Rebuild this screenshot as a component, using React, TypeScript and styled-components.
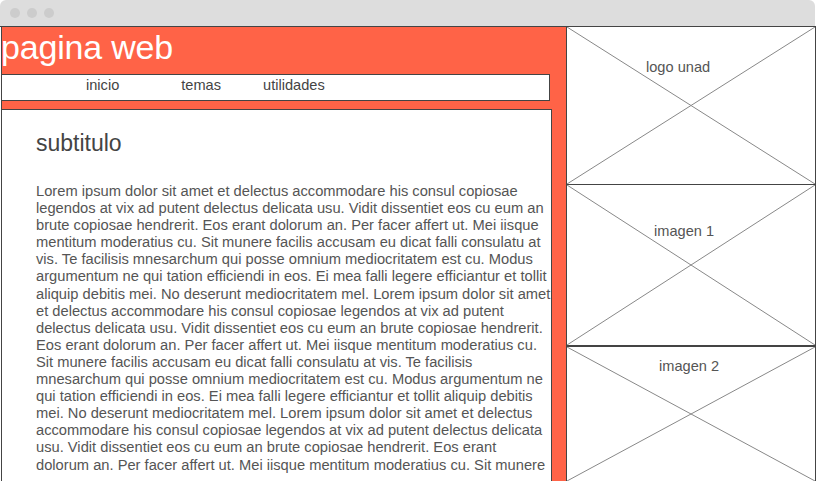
import styled, { createGlobalStyle } from "styled-components";

const GlobalStyle = createGlobalStyle`
  html, body {
    margin: 0;
    padding: 0;
    background: #ffffff;
    font-family: "Liberation Sans", Arial, sans-serif;
  }
  #root {
    width: 819px;
    height: 481px;
    overflow: hidden;
  }
`;

// line breaks follow the wireframe's text block
const loremLines = [
  "Lorem ipsum dolor sit amet et delectus accommodare his consul copiosae",
  "legendos at vix ad putent delectus delicata usu. Vidit dissentiet eos cu eum an",
  "brute copiosae hendrerit. Eos erant dolorum an. Per facer affert ut. Mei iisque",
  "mentitum moderatius cu. Sit munere facilis accusam eu dicat falli consulatu at",
  "vis. Te facilisis mnesarchum qui posse omnium mediocritatem est cu. Modus",
  "argumentum ne qui tation efficiendi in eos. Ei mea falli legere efficiantur et tollit",
  "aliquip debitis mei. No deserunt mediocritatem mel. Lorem ipsum dolor sit amet",
  "et delectus accommodare his consul copiosae legendos at vix ad putent",
  "delectus delicata usu. Vidit dissentiet eos cu eum an brute copiosae hendrerit.",
  "Eos erant dolorum an. Per facer affert ut. Mei iisque mentitum moderatius cu.",
  "Sit munere facilis accusam eu dicat falli consulatu at vis. Te facilisis",
  "mnesarchum qui posse omnium mediocritatem est cu. Modus argumentum ne",
  "qui tation efficiendi in eos. Ei mea falli legere efficiantur et tollit aliquip debitis",
  "mei. No deserunt mediocritatem mel. Lorem ipsum dolor sit amet et delectus",
  "accommodare his consul copiosae legendos at vix ad putent delectus delicata",
  "usu. Vidit dissentiet eos cu eum an brute copiosae hendrerit. Eos erant",
  "dolorum an. Per facer affert ut. Mei iisque mentitum moderatius cu. Sit munere",
];

// --- Window chrome ---

const Window = styled.div`
  display: flex;
  flex-direction: column;
  width: 819px;
  height: 481px;
`;

const Chrome = styled.div`
  height: 26px;
  width: 815px;
  background: #dddddd;
  border-radius: 6px 6px 0 0;
  display: flex;
  align-items: center;
  gap: 7px;
  padding-left: 10px;
  box-sizing: border-box;
`;

const Dot = styled.span`
  width: 10px;
  height: 10px;
  border-radius: 50%;
  background: #cccccc;
`;

// --- Frame ---

const Frame = styled.div`
  flex: 1;
  display: flex;
  width: 816px;
  padding-left: 1px;
  box-sizing: border-box;
  border-top: 1px solid #444;
  overflow: hidden;
`;

const LeftCol = styled.div`
  width: 565px;
  box-sizing: border-box;
  border-left: 1px solid #444;
  background: #ff6347;
  display: flex;
  flex-direction: column;
`;

const Title = styled.h1`
  margin: 0 0 0 -1px;
  height: 47px;
  line-height: 40px;
  font-size: 34px;
  font-weight: 400;
  color: #ffffff;
  letter-spacing: -0.2px;
`;

const Nav = styled.nav`
  width: 548px;
  height: 27px;
  box-sizing: border-box;
  border: 1px solid #444;
  border-left: none;
  background: #ffffff;
  display: flex;
  align-items: center;
`;

const NavLink = styled.span<{ $offset: number }>`
  margin-left: ${(p) => p.$offset}px;
  font-size: 14.6px;
  color: #444;
  line-height: 16px;
  padding-bottom: 6px;
`;

const Content = styled.main`
  margin-top: 8px;
  width: 550px;
  flex: 1;
  box-sizing: border-box;
  border-top: 1px solid #444;
  border-right: 1px solid #444;
  background: #ffffff;
  padding: 20px 0 0 34px;
  overflow: hidden;
`;

const Subtitle = styled.h2`
  margin: 0;
  font-size: 23px;
  line-height: 26px;
  font-weight: 400;
  color: #444;
`;

const Paragraph = styled.p`
  margin: 27px 0 0;
  font-size: 14.7px;
  line-height: 17.1px;
  color: #555;
`;

const Line = styled.span`
  display: block;
  white-space: nowrap;
`;

// --- Right column ---

const RightCol = styled.aside`
  width: 250px;
  box-sizing: border-box;
  border-left: 1px solid #444;
  border-right: 1px solid #444;
  display: flex;
  flex-direction: column;
`;

const ImageBox = styled.div<{ $height?: number; $thick?: boolean }>`
  position: relative;
  flex: ${(p) => (p.$height ? `0 0 ${p.$height}px` : "1")};
  box-sizing: border-box;
  border-bottom: ${(p) => (p.$height ? (p.$thick ? "2px" : "1px") : "0")} solid #444;
  background: #ffffff;
`;

const Cross = styled.svg`
  position: absolute;
  inset: 0;
  width: 100%;
  height: 100%;
`;

const Label = styled.span<{ $top: number; $left: number }>`
  position: absolute;
  top: ${(p) => p.$top}px;
  left: ${(p) => p.$left}px;
  font-size: 14.6px;
  line-height: 16px;
  color: #555;
`;

function Placeholder({
  label,
  height,
  thick,
  top,
  left,
}: {
  label: string;
  height?: number;
  thick?: boolean;
  top: number;
  left: number;
}) {
  return (
    <ImageBox $height={height} $thick={thick}>
      <Cross viewBox="0 0 100 100" preserveAspectRatio="none">
        <line x1="0" y1="0" x2="100" y2="100" stroke="#888" strokeWidth="1" vectorEffect="non-scaling-stroke" />
        <line x1="100" y1="0" x2="0" y2="100" stroke="#888" strokeWidth="1" vectorEffect="non-scaling-stroke" />
      </Cross>
      <Label $top={top} $left={left}>
        {label}
      </Label>
    </ImageBox>
  );
}

export default function App() {
  return (
    <>
      <GlobalStyle />
      <Window>
        <Chrome>
          <Dot />
          <Dot />
          <Dot />
        </Chrome>
        <Frame>
          <LeftCol>
            <Title>pagina web</Title>
            <Nav>
              <NavLink $offset={84}>inicio</NavLink>
              <NavLink $offset={62}>temas</NavLink>
              <NavLink $offset={42}>utilidades</NavLink>
            </Nav>
            <Content>
              <Subtitle>subtitulo</Subtitle>
              <Paragraph>
                {loremLines.map((line, i) => (
                  <Line key={i}>{line}</Line>
                ))}
              </Paragraph>
            </Content>
          </LeftCol>
          <RightCol>
            <Placeholder label="logo unad" height={158} top={32} left={79} />
            <Placeholder label="imagen 1" height={162} thick top={38} left={87} />
            <Placeholder label="imagen 2" top={11} left={92} />
          </RightCol>
        </Frame>
      </Window>
    </>
  );
}
